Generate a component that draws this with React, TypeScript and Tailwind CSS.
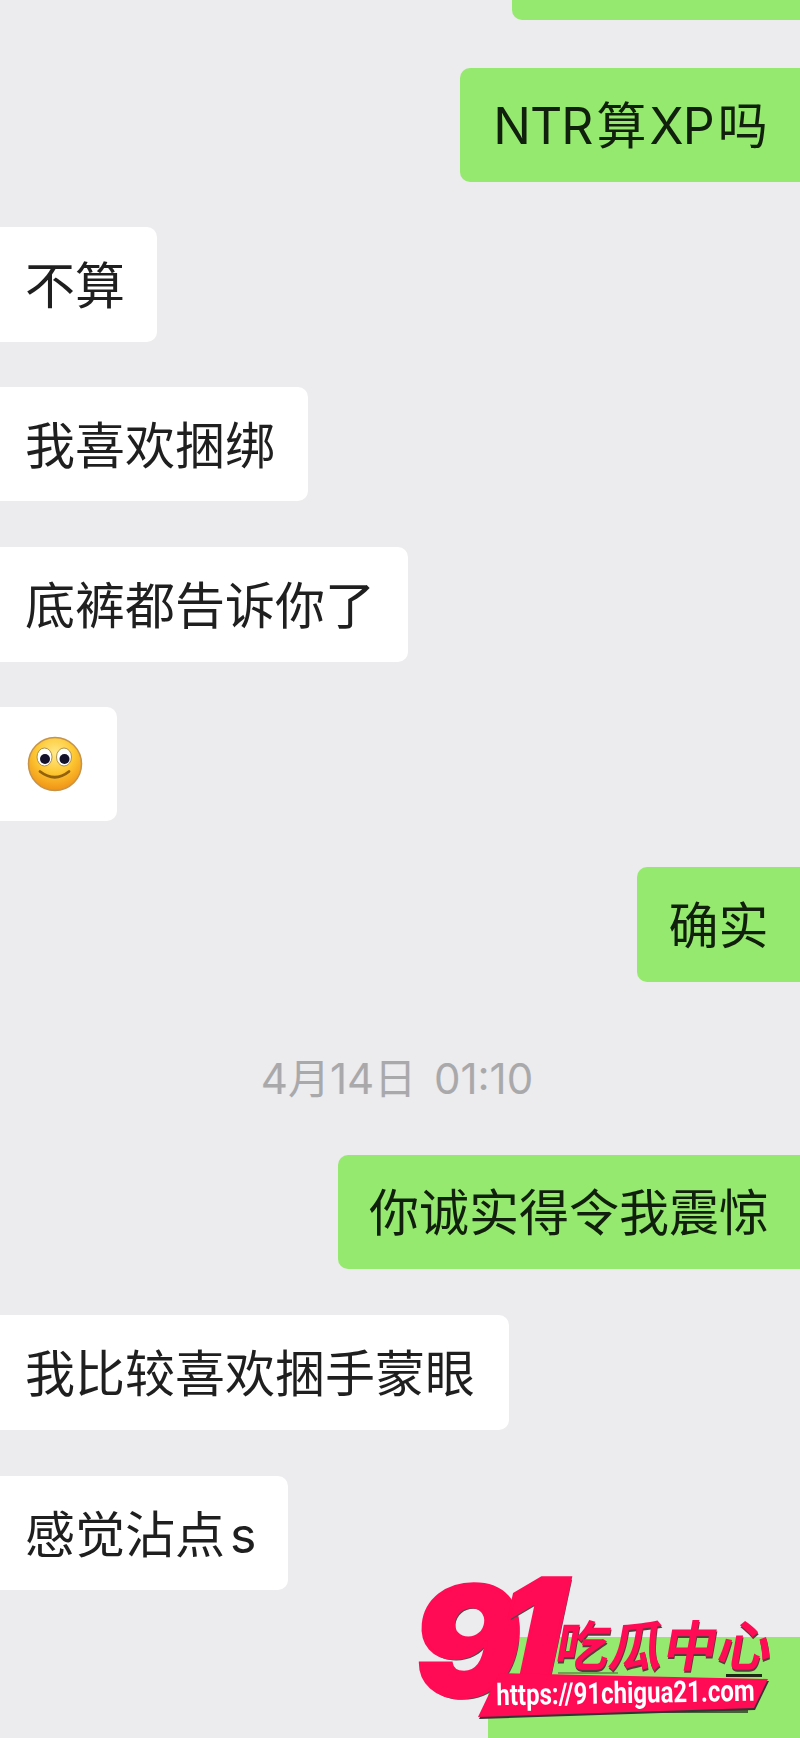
import type { ReactNode } from 'react';

function Smiley() {
  return (
    <svg className="ml-[2px] -mt-[3px]" width="56" height="56" viewBox="0 0 56 56">
      <defs>
        <radialGradient id="face" cx="50%" cy="30%" r="72%">
          <stop offset="0%" stopColor="#ffe98a" />
          <stop offset="50%" stopColor="#fdc833" />
          <stop offset="100%" stopColor="#ef8f14" />
        </radialGradient>
      </defs>
      <circle cx="28" cy="28" r="26.5" fill="url(#face)" stroke="#c6934a" strokeWidth="1.5" />
      <ellipse cx="17.5" cy="21" rx="7.5" ry="9" fill="#fff" stroke="#a5873f" strokeWidth="0.9" />
      <ellipse cx="37" cy="21" rx="7.5" ry="9" fill="#fff" stroke="#a5873f" strokeWidth="0.9" />
      <circle cx="18" cy="23" r="5" fill="#14122a" />
      <circle cx="37.5" cy="23" r="5" fill="#14122a" />
      <path d="M13 35.5 Q28 47 42 35.5" fill="none" stroke="#93600b" strokeWidth="2.8" strokeLinecap="round" />
    </svg>
  );
}

function Left({ children, w, mt }: { children: ReactNode; w: string; mt: string }) {
  return (
    <div className={`flex h-[115px] items-center self-start rounded-r-[10px] bg-white pt-[3px] pl-[25px] text-[50px] leading-none whitespace-nowrap text-[#1f1f1f] ${w} ${mt}`}>
      {children}
    </div>
  );
}

function Right({ children, w, mt }: { children: ReactNode; w: string; mt: string }) {
  return (
    <div className={`flex h-[115px] items-center justify-center self-end rounded-l-[10px] bg-[#95e96e] pt-[2px] text-[50px] leading-none whitespace-nowrap text-[#10200c] ${w} ${mt}`}>
      {children}
    </div>
  );
}

function Watermark() {
  return (
    <div className="absolute top-[1560px] left-[400px] h-[178px] w-[400px] [font-family:Inter,'Noto_Sans_CJK_SC',sans-serif]">
      <span className="absolute top-[5px] left-[18px] origin-center -skew-x-[6deg] scale-x-[1.04] text-[152px] leading-[152px] font-black text-[#ff0a54] [-webkit-text-stroke:3px_#ff0a54] [text-shadow:2px_2px_0_#4a4a4a]">9</span>
      <span className="absolute top-[-2px] left-[100px] origin-center -skew-x-[12deg] text-[146px] leading-[146px] font-black text-[#ff0a54] [-webkit-text-stroke:3px_#ff0a54] [text-shadow:2px_2px_0_#4a4a4a]">1</span>
      <span className="absolute top-[56px] left-[157px] -skew-x-[10deg] text-[54px] leading-[54px] font-semibold whitespace-nowrap text-[#ff0a54] [font-family:'Noto_Sans_CJK_SC',sans-serif] [text-shadow:1px_2px_0_#5a3a3a]">吃瓜中心</span>
      <div className="absolute top-[113px] left-[78px] h-[44px] w-[290px] drop-shadow-[1px_2px_0_#333]">
        <div className="flex h-full w-full items-center justify-center bg-[#ff0a54] pb-[5px] pl-[6px] [clip-path:polygon(21px_0,290px_6px,276px_35px,0_44px)]">
          <span className="-rotate-1 scale-x-[.8] text-[30px] leading-none font-bold whitespace-nowrap text-white [font-family:Roboto,sans-serif]">https://91chigua21.com</span>
        </div>
      </div>
    </div>
  );
}

export default function App() {
  return (
    <div className="relative flex h-[1738px] w-[800px] flex-col overflow-hidden bg-[#ecebed] [font-family:Inter,'Noto_Sans_CJK_SC',sans-serif]">
      <div className="h-[20px] w-[288px] self-end rounded-bl-[10px] bg-[#95e96e]" />
      <Right w="w-[340px] tracking-[-1px] [word-spacing:-9px]" mt="mt-[48px]">NTR 算 XP 吗</Right>
      <Left w="w-[157px]" mt="mt-[45px]">不算</Left>
      <Left w="w-[308px]" mt="mt-[45px]">我喜欢捆绑</Left>
      <Left w="w-[408px]" mt="mt-[46px]">底裤都告诉你了</Left>
      <Left w="w-[117px]" mt="mt-[45px]"><Smiley /></Left>
      <Right w="w-[163px]" mt="mt-[46px]">确实</Right>
      <div className="mt-[72px] h-[50px] pr-[6px] text-center text-[42px] leading-[50px] text-[#a9a9ab] [word-spacing:6px]">4月14日 01:10</div>
      <Right w="w-[462px]" mt="mt-[51px]">你诚实得令我震惊</Right>
      <Left w="w-[509px]" mt="mt-[46px]">我比较喜欢捆手蒙眼</Left>
      <Left w="w-[288px] [word-spacing:-9px]" mt="mt-[46px]">感觉沾点 s</Left>
      <div className="relative mt-[47px] h-[101px] w-[312px] self-end rounded-tl-[10px] bg-[#95e96e]">
        {/* bits of the covered message that show round the banner */}
        <div className="absolute top-[35px] left-[70px] h-[2px] w-[60px] bg-[#2c3a24] opacity-40" />
        <div className="absolute top-[37px] left-[238px] h-[3px] w-[36px] bg-[#1c2a16]" />
        <div className="absolute top-[73px] left-[150px] h-[3px] w-[110px] bg-[#1c2a16] opacity-70" />
      </div>
      <Watermark />
    </div>
  );
}
